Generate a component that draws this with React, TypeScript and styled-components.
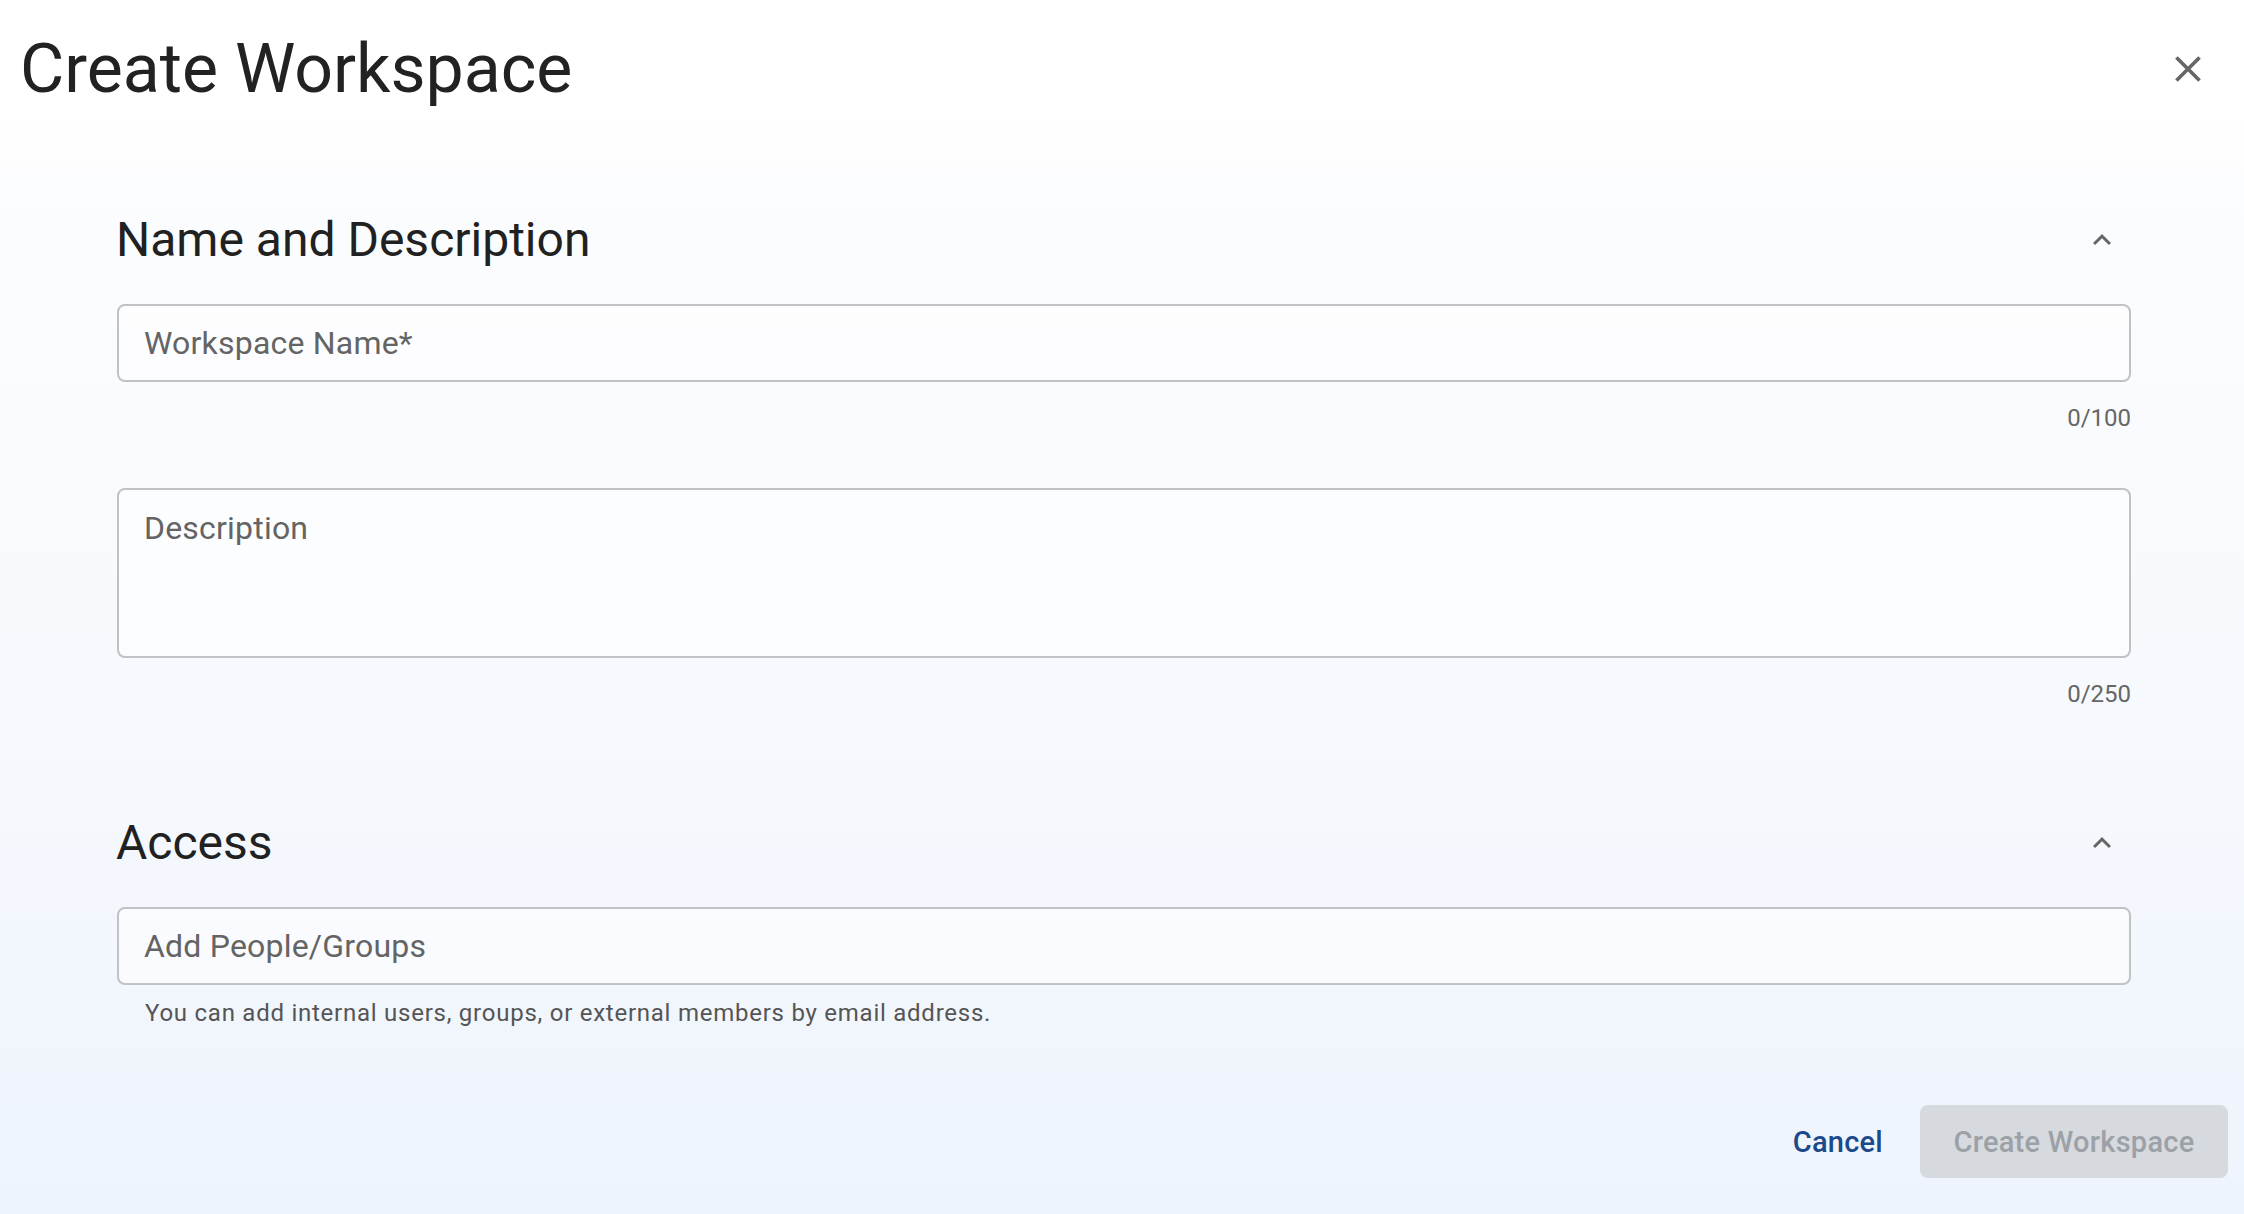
import styled, { createGlobalStyle } from "styled-components";

const GlobalStyle = createGlobalStyle`
  html, body {
    margin: 0;
    padding: 0;
  }
  body {
    font-family: Roboto, "Noto Sans", Arial, sans-serif;
    color: #212121;
  }
  * {
    box-sizing: border-box;
  }
`;

const Page = styled.div`
  min-height: 100vh;
  display: flex;
  flex-direction: column;
  background: linear-gradient(
    180deg,
    #ffffff 0%,
    #ffffff 9%,
    #fbfcfe 18%,
    #f6f9fd 60%,
    #eef4fd 100%
  );
`;

const Header = styled.header`
  display: flex;
  justify-content: space-between;
  align-items: center;
  padding: 29px 32px 0 20px;
`;

const Title = styled.h1`
  margin: 0;
  font-size: 68px;
  line-height: 80px;
  font-weight: 400;
  color: #222222;
`;

const IconButton = styled.button<{ $size: number }>`
  width: ${(p) => p.$size}px;
  height: ${(p) => p.$size}px;
  display: flex;
  align-items: center;
  justify-content: center;
  padding: 0;
  border: none;
  background: transparent;
  color: #666666;
  cursor: pointer;
`;

const Body = styled.main`
  padding: 0 113px 0 117px;
`;

const Section = styled.section<{ $top: number }>`
  margin-top: ${(p) => p.$top}px;
  display: flex;
  flex-direction: column;
`;

const SectionHeader = styled.div`
  display: flex;
  justify-content: space-between;
  align-items: center;
  height: 56px;
  margin-bottom: 36px;
`;

const SectionTitle = styled.h2`
  margin: 0 0 0 -1px;
  font-size: 48px;
  line-height: 56px;
  font-weight: 400;
  color: #212121;
`;

const fieldBase = `
  width: 100%;
  border: 2px solid #c1c2c4;
  border-radius: 8px;
  background: rgba(255, 255, 255, 0.55);
  font-family: Roboto, "Noto Sans", Arial, sans-serif;
  font-size: 32px;
  line-height: 40px;
  letter-spacing: 0.2px;
  color: #212121;
  padding: 0 25px;
  outline: none;
  &::placeholder {
    color: #646464;
    opacity: 1;
  }
`;

const TextInput = styled.input`
  ${fieldBase}
  height: 78px;
`;

const TextArea = styled.textarea<{ $top: number }>`
  ${fieldBase}
  margin-top: ${(p) => p.$top}px;
  height: 170px;
  padding-top: 18px;
  resize: none;
  display: block;
`;

const Counter = styled.div`
  margin-top: 20px;
  text-align: right;
  font-size: 24px;
  line-height: 32px;
  color: #666666;
`;

const Helper = styled.div`
  margin-top: 12px;
  padding-left: 28px;
  font-size: 24px;
  line-height: 32px;
  color: #555555;
  letter-spacing: 0.75px;
`;

const Footer = styled.footer`
  margin-top: auto;
  display: flex;
  justify-content: flex-end;
  align-items: center;
  gap: 17px;
  padding: 0 16px 36px 0;
`;

const CancelButton = styled.button`
  height: 73px;
  padding: 0 20px;
  border: none;
  background: transparent;
  font-family: Roboto, "Noto Sans", Arial, sans-serif;
  font-size: 29px;
  font-weight: 500;
  letter-spacing: 0.25px;
  color: #1b4a8a;
  cursor: pointer;
`;

const PrimaryButton = styled.button`
  height: 73px;
  width: 308px;
  border: none;
  border-radius: 8px;
  background: #d6dade;
  font-family: Roboto, "Noto Sans", Arial, sans-serif;
  font-size: 29px;
  font-weight: 500;
  letter-spacing: 0.25px;
  color: #9ca1a7;
`;

const CloseIcon = () => (
  <svg width="44" height="44" viewBox="0 0 24 24" fill="currentColor">
    <path d="M19 6.41L17.59 5 12 10.59 6.41 5 5 6.41 10.59 12 5 17.59 6.41 19 12 13.41 17.59 19 19 17.59 13.41 12z" />
  </svg>
);

const ChevronUp = () => (
  <svg width="36" height="36" viewBox="0 0 24 24" fill="currentColor">
    <path d="M12 8l-6 6 1.41 1.41L12 10.83l4.59 4.58L18 14z" />
  </svg>
);

const App = () => {
  return (
    <>
      <GlobalStyle />
      <Page>
        <Header>
          <Title>Create Workspace</Title>
          <IconButton $size={48} aria-label="Close">
            <CloseIcon />
          </IconButton>
        </Header>

        <Body>
          <Section $top={103}>
            <SectionHeader>
              <SectionTitle>Name and Description</SectionTitle>
              <IconButton $size={48} aria-label="Collapse" style={{ marginRight: 5 }}>
                <ChevronUp />
              </IconButton>
            </SectionHeader>
            <TextInput placeholder="Workspace Name*" />
            <Counter>0/100</Counter>
            <TextArea $top={54} placeholder="Description" />
            <Counter>0/250</Counter>
          </Section>

          <Section $top={105}>
            <SectionHeader>
              <SectionTitle>Access</SectionTitle>
              <IconButton $size={48} aria-label="Collapse" style={{ marginRight: 5 }}>
                <ChevronUp />
              </IconButton>
            </SectionHeader>
            <TextInput placeholder="Add People/Groups" />
            <Helper>
              You can add internal users, groups, or external members by email address.
            </Helper>
          </Section>
        </Body>

        <Footer>
          <CancelButton>Cancel</CancelButton>
          <PrimaryButton disabled>Create Workspace</PrimaryButton>
        </Footer>
      </Page>
    </>
  );
};

export default App;
